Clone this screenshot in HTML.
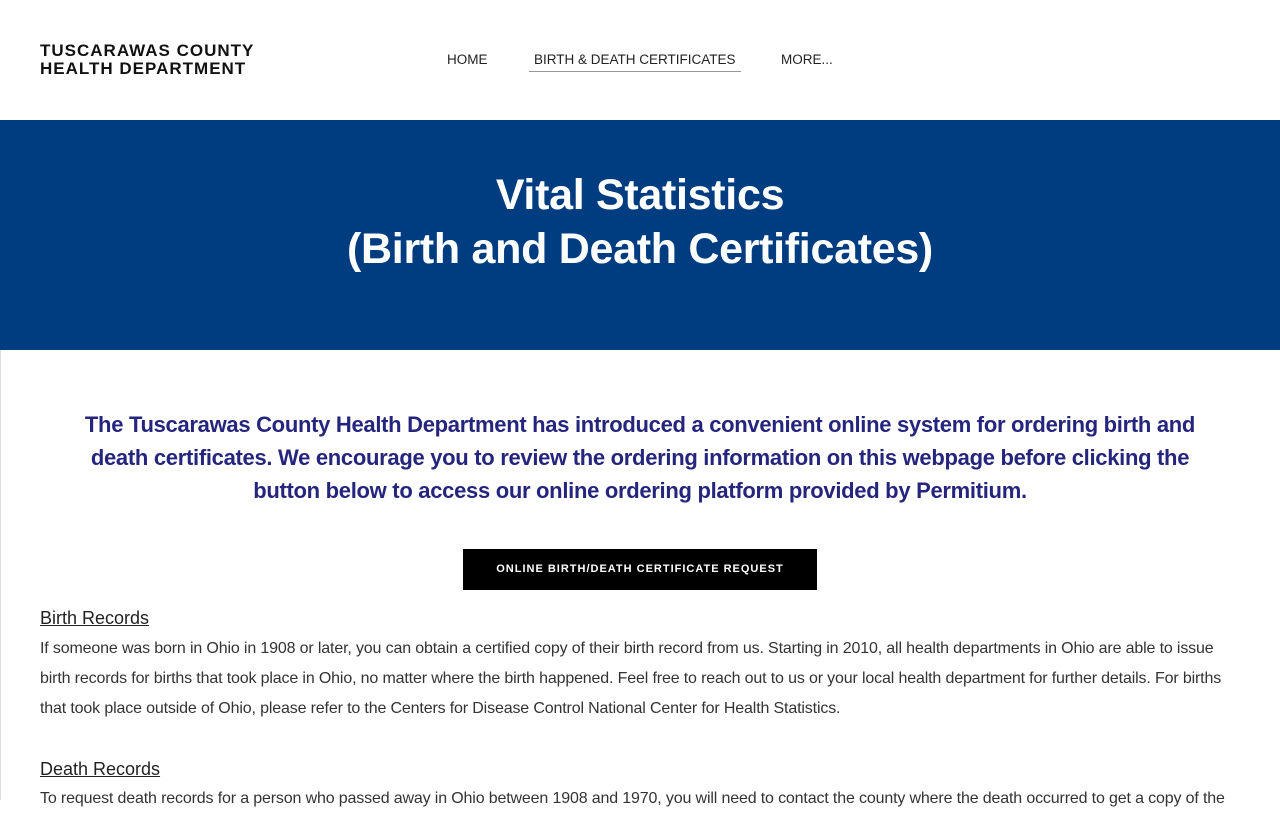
<!DOCTYPE html>
<html><head><meta charset="utf-8"><style>
body{margin:0;background:#fff;font-family:"Liberation Sans",sans-serif;width:1280px;height:800px;overflow:hidden;position:relative}
.logo{position:absolute;left:40px;top:42px;font-weight:bold;font-size:17px;line-height:18px;letter-spacing:1px;color:#111}
.nav{position:absolute;top:52px;font-size:13.5px;color:#222;letter-spacing:0}
.banner{position:absolute;top:120px;left:0;width:1280px;height:230px;background:#003d80;color:#fff;text-align:center}
.banner h1{margin:0;padding-top:48px;font-size:43px;line-height:54px;font-weight:bold;letter-spacing:-0.3px}
.content{position:absolute;top:350px;left:0;width:1280px;height:450px;border-left:1px solid #ddd}
.intro{position:absolute;top:408px;left:55px;width:1170px;text-align:center;color:#25257d;font-size:22px;line-height:33px;font-weight:bold;letter-spacing:-0.3px}
.btn{position:absolute;top:549px;left:463px;width:354px;height:41px;background:#000;color:#fff;font-size:11px;font-weight:bold;letter-spacing:1px;text-align:center;line-height:41px}
.h{position:absolute;left:40px;font-size:18px;text-decoration:underline;color:#222}
.p{position:absolute;left:40px;width:1200px;font-size:16px;line-height:30px;color:#333;letter-spacing:-0.15px}
</style></head><body>
<div class="logo">TUSCARAWAS COUNTY<br>HEALTH DEPARTMENT</div>
<div class="nav" style="left:447px">HOME</div>
<div class="nav" style="left:529px;border-bottom:1px solid #999;padding:0 5px 4px 5px;">BIRTH &amp; DEATH CERTIFICATES</div>
<div class="nav" style="left:781px">MORE...</div>
<div class="banner"><h1>Vital Statistics<br>(Birth and Death Certificates)</h1></div>
<div class="content"></div>
<div class="intro">The Tuscarawas County Health Department has introduced a convenient online system for ordering birth and death certificates. We encourage you to review the ordering information on this webpage before clicking the button below to access our online ordering platform provided by Permitium.</div>
<div class="btn">ONLINE BIRTH/DEATH CERTIFICATE REQUEST</div>
<div class="h" style="top:608px">Birth Records</div>
<div class="p" style="top:634px">If someone was born in Ohio in 1908 or later, you can obtain a certified copy of their birth record from us. Starting in 2010, all health departments in Ohio are able to issue birth records for births that took place in Ohio, no matter where the birth happened. Feel free to reach out to us or your local health department for further details. For births that took place outside of Ohio, please refer to the Centers for Disease Control National Center for Health Statistics.</div>
<div class="h" style="top:759px">Death Records</div>
<div class="p" style="top:784px;white-space:nowrap">To request death records for a person who passed away in Ohio between 1908 and 1970, you will need to contact the county where the death occurred to get a copy of the</div>
</body></html>
